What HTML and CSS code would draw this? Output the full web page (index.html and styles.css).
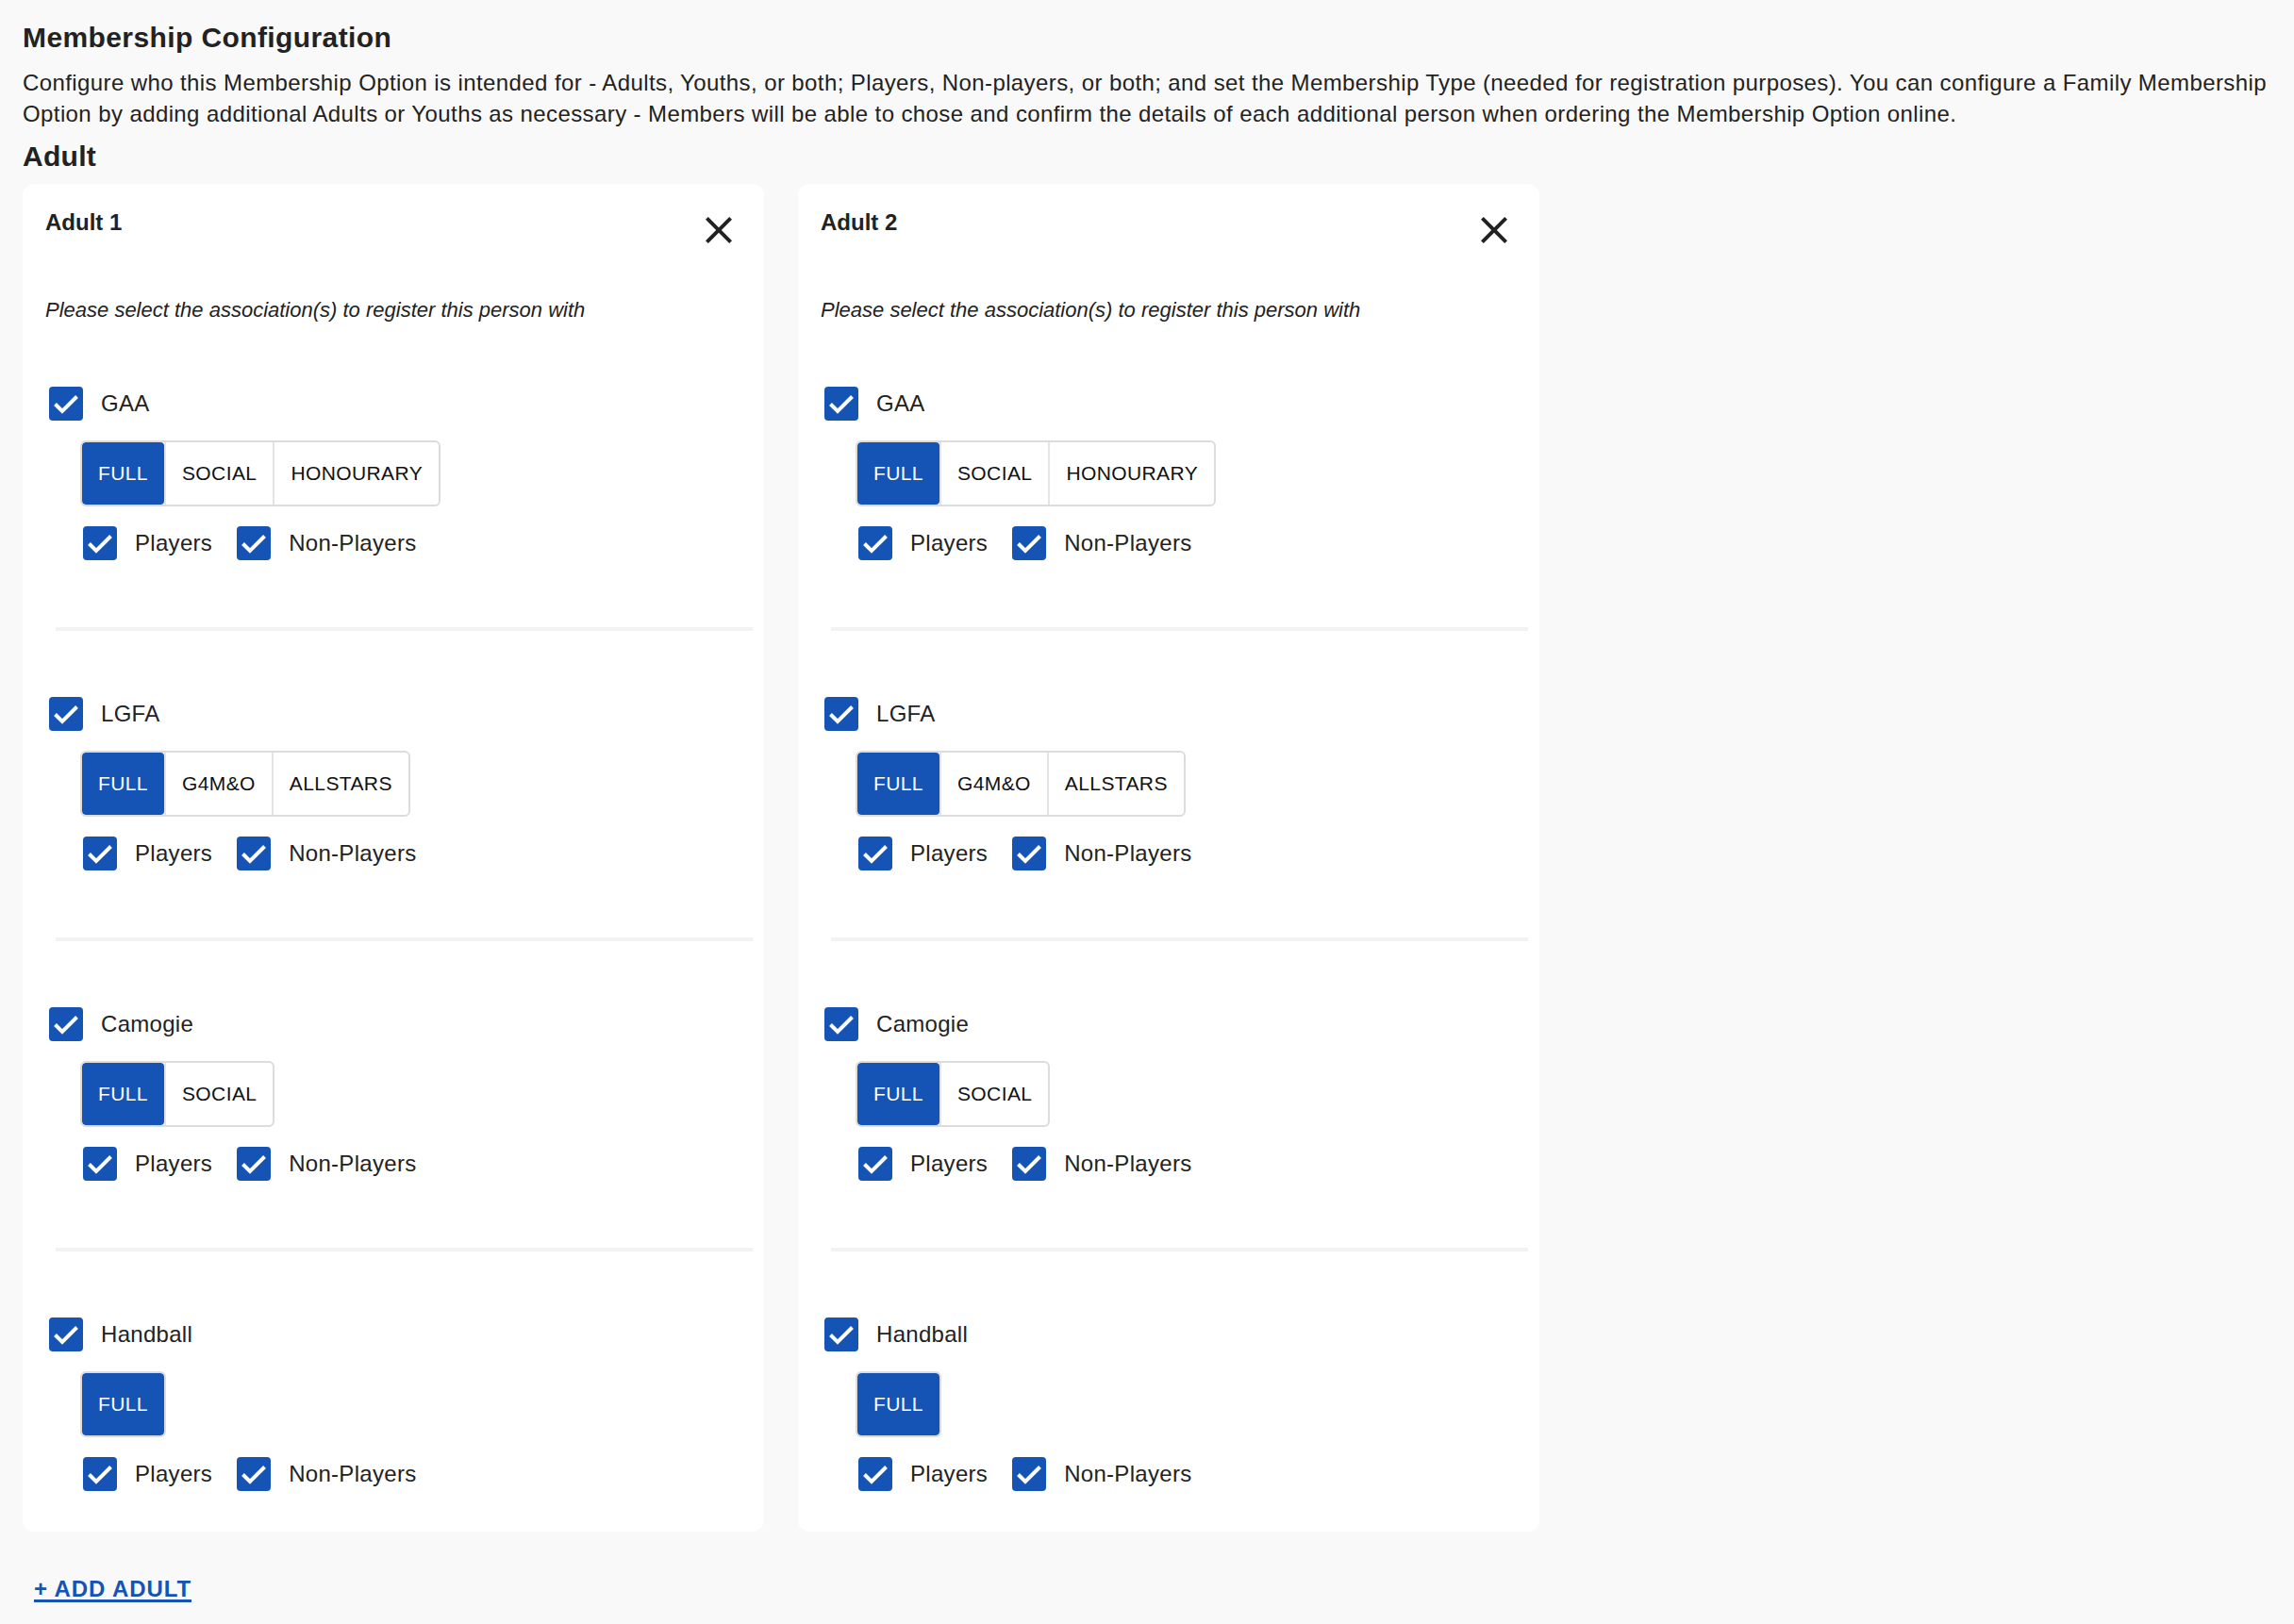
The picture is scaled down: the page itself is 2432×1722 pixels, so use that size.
FILE: index.html
```html
<!DOCTYPE html>
<html lang="en">
<head>
<meta charset="utf-8">
<title>Membership Configuration</title>
<link rel="stylesheet" href="styles.css">
</head>
<body>
<main class="page">
  <h1 class="page-title">Membership Configuration</h1>
  <p class="page-desc">Configure who this Membership Option is intended for - Adults, Youths, or both; Players, Non-players, or both; and set the Membership Type (needed for registration purposes). You can configure a Family Membership Option by adding additional Adults or Youths as necessary - Members will be able to chose and confirm the details of each additional person when ordering the Membership Option online.</p>
  <h2 class="group-title">Adult</h2>

  <div class="cards">
    <!-- Adult 1 -->
    <section class="card">
      <header class="card-head">
        <h3 class="card-title">Adult 1</h3>
        <button class="close" type="button" aria-label="Remove">
          <svg viewBox="5 5 14 14" width="28" height="28"><path d="M19 6.41L17.59 5 12 10.59 6.41 5 5 6.41 10.59 12 5 17.59 6.41 19 12 13.41 17.59 19 19 17.59 13.41 12z"/></svg>
        </button>
      </header>
      <p class="card-hint">Please select the association(s) to register this person with</p>

      <div class="assoc">
        <label class="check-row"><span class="box"><svg viewBox="0 0 36 36"><polyline points="6.5,18.5 14,26 29.5,10.5"/></svg></span><span class="assoc-name">GAA</span></label>
        <div class="seg"><span class="seg-btn active">FULL</span><span class="seg-btn">SOCIAL</span><span class="seg-btn">HONOURARY</span></div>
        <div class="player-row">
          <label class="check-row"><span class="box"><svg viewBox="0 0 36 36"><polyline points="6.5,18.5 14,26 29.5,10.5"/></svg></span><span class="opt">Players</span></label>
          <label class="check-row"><span class="box"><svg viewBox="0 0 36 36"><polyline points="6.5,18.5 14,26 29.5,10.5"/></svg></span><span class="opt">Non-Players</span></label>
        </div>
      </div>
      <hr class="divider">

      <div class="assoc">
        <label class="check-row"><span class="box"><svg viewBox="0 0 36 36"><polyline points="6.5,18.5 14,26 29.5,10.5"/></svg></span><span class="assoc-name">LGFA</span></label>
        <div class="seg"><span class="seg-btn active">FULL</span><span class="seg-btn">G4M&amp;O</span><span class="seg-btn">ALLSTARS</span></div>
        <div class="player-row">
          <label class="check-row"><span class="box"><svg viewBox="0 0 36 36"><polyline points="6.5,18.5 14,26 29.5,10.5"/></svg></span><span class="opt">Players</span></label>
          <label class="check-row"><span class="box"><svg viewBox="0 0 36 36"><polyline points="6.5,18.5 14,26 29.5,10.5"/></svg></span><span class="opt">Non-Players</span></label>
        </div>
      </div>
      <hr class="divider">

      <div class="assoc">
        <label class="check-row"><span class="box"><svg viewBox="0 0 36 36"><polyline points="6.5,18.5 14,26 29.5,10.5"/></svg></span><span class="assoc-name">Camogie</span></label>
        <div class="seg"><span class="seg-btn active">FULL</span><span class="seg-btn">SOCIAL</span></div>
        <div class="player-row">
          <label class="check-row"><span class="box"><svg viewBox="0 0 36 36"><polyline points="6.5,18.5 14,26 29.5,10.5"/></svg></span><span class="opt">Players</span></label>
          <label class="check-row"><span class="box"><svg viewBox="0 0 36 36"><polyline points="6.5,18.5 14,26 29.5,10.5"/></svg></span><span class="opt">Non-Players</span></label>
        </div>
      </div>
      <hr class="divider">

      <div class="assoc last">
        <label class="check-row"><span class="box"><svg viewBox="0 0 36 36"><polyline points="6.5,18.5 14,26 29.5,10.5"/></svg></span><span class="assoc-name">Handball</span></label>
        <div class="seg"><span class="seg-btn active">FULL</span></div>
        <div class="player-row">
          <label class="check-row"><span class="box"><svg viewBox="0 0 36 36"><polyline points="6.5,18.5 14,26 29.5,10.5"/></svg></span><span class="opt">Players</span></label>
          <label class="check-row"><span class="box"><svg viewBox="0 0 36 36"><polyline points="6.5,18.5 14,26 29.5,10.5"/></svg></span><span class="opt">Non-Players</span></label>
        </div>
      </div>
    </section>

    <!-- Adult 2 -->
    <section class="card">
      <header class="card-head">
        <h3 class="card-title">Adult 2</h3>
        <button class="close" type="button" aria-label="Remove">
          <svg viewBox="5 5 14 14" width="28" height="28"><path d="M19 6.41L17.59 5 12 10.59 6.41 5 5 6.41 10.59 12 5 17.59 6.41 19 12 13.41 17.59 19 19 17.59 13.41 12z"/></svg>
        </button>
      </header>
      <p class="card-hint">Please select the association(s) to register this person with</p>

      <div class="assoc">
        <label class="check-row"><span class="box"><svg viewBox="0 0 36 36"><polyline points="6.5,18.5 14,26 29.5,10.5"/></svg></span><span class="assoc-name">GAA</span></label>
        <div class="seg"><span class="seg-btn active">FULL</span><span class="seg-btn">SOCIAL</span><span class="seg-btn">HONOURARY</span></div>
        <div class="player-row">
          <label class="check-row"><span class="box"><svg viewBox="0 0 36 36"><polyline points="6.5,18.5 14,26 29.5,10.5"/></svg></span><span class="opt">Players</span></label>
          <label class="check-row"><span class="box"><svg viewBox="0 0 36 36"><polyline points="6.5,18.5 14,26 29.5,10.5"/></svg></span><span class="opt">Non-Players</span></label>
        </div>
      </div>
      <hr class="divider">

      <div class="assoc">
        <label class="check-row"><span class="box"><svg viewBox="0 0 36 36"><polyline points="6.5,18.5 14,26 29.5,10.5"/></svg></span><span class="assoc-name">LGFA</span></label>
        <div class="seg"><span class="seg-btn active">FULL</span><span class="seg-btn">G4M&amp;O</span><span class="seg-btn">ALLSTARS</span></div>
        <div class="player-row">
          <label class="check-row"><span class="box"><svg viewBox="0 0 36 36"><polyline points="6.5,18.5 14,26 29.5,10.5"/></svg></span><span class="opt">Players</span></label>
          <label class="check-row"><span class="box"><svg viewBox="0 0 36 36"><polyline points="6.5,18.5 14,26 29.5,10.5"/></svg></span><span class="opt">Non-Players</span></label>
        </div>
      </div>
      <hr class="divider">

      <div class="assoc">
        <label class="check-row"><span class="box"><svg viewBox="0 0 36 36"><polyline points="6.5,18.5 14,26 29.5,10.5"/></svg></span><span class="assoc-name">Camogie</span></label>
        <div class="seg"><span class="seg-btn active">FULL</span><span class="seg-btn">SOCIAL</span></div>
        <div class="player-row">
          <label class="check-row"><span class="box"><svg viewBox="0 0 36 36"><polyline points="6.5,18.5 14,26 29.5,10.5"/></svg></span><span class="opt">Players</span></label>
          <label class="check-row"><span class="box"><svg viewBox="0 0 36 36"><polyline points="6.5,18.5 14,26 29.5,10.5"/></svg></span><span class="opt">Non-Players</span></label>
        </div>
      </div>
      <hr class="divider">

      <div class="assoc last">
        <label class="check-row"><span class="box"><svg viewBox="0 0 36 36"><polyline points="6.5,18.5 14,26 29.5,10.5"/></svg></span><span class="assoc-name">Handball</span></label>
        <div class="seg"><span class="seg-btn active">FULL</span></div>
        <div class="player-row">
          <label class="check-row"><span class="box"><svg viewBox="0 0 36 36"><polyline points="6.5,18.5 14,26 29.5,10.5"/></svg></span><span class="opt">Players</span></label>
          <label class="check-row"><span class="box"><svg viewBox="0 0 36 36"><polyline points="6.5,18.5 14,26 29.5,10.5"/></svg></span><span class="opt">Non-Players</span></label>
        </div>
      </div>
    </section>
  </div>

  <a class="add-link" href="#">+ ADD ADULT</a>
</main>
</body>
</html>
```

FILE: styles.css
```css
* {
  box-sizing: border-box;
}

html, body {
  margin: 0;
  background: #f9f9f9;
}

body {
  font-family: "Liberation Sans", Arial, Helvetica, sans-serif;
  color: #222;
}

.page {
  padding: 22px 24px 0 24px;
}

.page-title {
  margin: 0;
  font-size: 30px;
  line-height: 36px;
  font-weight: 700;
  letter-spacing: 0.4px;
  color: #222;
}

.page-desc {
  margin: 13px 0 0 0;
  font-size: 24px;
  line-height: 33px;
  letter-spacing: 0.4px;
  color: #222;
}

.group-title {
  margin: 11px 0 0 0;
  font-size: 30px;
  line-height: 36px;
  font-weight: 700;
  letter-spacing: 0.3px;
  color: #222;
}

/* cards */
.cards {
  margin-top: 11px;
  display: flex;
  align-items: flex-start;
  gap: 36px;
}

.card {
  width: 786px;
  background: #fff;
  border-radius: 12px;
}

.card-head {
  display: flex;
  justify-content: space-between;
  align-items: flex-start;
  padding: 24px 34px 0 24px;
}

.card-title {
  margin: 0;
  font-size: 24px;
  line-height: 33px;
  font-weight: 700;
  color: #222;
}

.close {
  margin-top: 11px;
  padding: 0;
  border: 0;
  background: none;
  width: 28px;
  height: 28px;
  display: block;
}

.close svg {
  display: block;
  fill: #222;
}

.card-hint {
  margin: 59px 0 0 0;
  padding-left: 24px;
  font-size: 22px;
  line-height: 24px;
  font-style: italic;
  color: #222;
}

/* association blocks */
.assoc {
  padding: 70px 0 71px 28px;
}

.card-hint + .assoc {
  padding-top: 69px;
}

.assoc.last {
  padding-bottom: 43px;
}

.divider {
  margin: 0 12px 0 35px;
  height: 4px;
  border: 0;
  background: #f2f2f2;
}

.check-row {
  display: flex;
  align-items: center;
  height: 36px;
  cursor: pointer;
}

.box {
  width: 36px;
  height: 36px;
  flex: none;
  border-radius: 4px;
  background: #1553b4;
  margin-right: 19px;
  display: flex;
}

.box svg {
  width: 36px;
  height: 36px;
  fill: none;
  stroke: #fff;
  stroke-width: 4;
}

.assoc-name,
.opt {
  font-size: 24px;
  line-height: 36px;
  letter-spacing: 0.3px;
  color: #222;
}

/* segmented membership type */
.seg {
  margin: 21px 0 0 33px;
  display: inline-flex;
  height: 70px;
  border: 2px solid #dcdcdc;
  border-radius: 6px;
  overflow: hidden;
  background: #fff;
}

.seg-btn {
  display: flex;
  align-items: center;
  padding: 0 17px;
  font-size: 21px;
  letter-spacing: 0.4px;
  color: #111;
  border-left: 2px solid #e4e4e4;
}

.seg-btn:first-child {
  border-left: 0;
}

.seg-btn.active {
  background: #1553b4;
  color: #fff;
  border-radius: 4px;
}

.player-row {
  margin: 21px 0 0 36px;
  display: flex;
  gap: 26px;
}

/* add link */
.add-link {
  display: inline-block;
  margin: 44px 0 0 12px;
  font-size: 24px;
  line-height: 33px;
  font-weight: 700;
  letter-spacing: 0.9px;
  color: #1553b4;
  text-decoration: underline;
  text-decoration-thickness: 3px;
  text-underline-offset: 3px;
}
```
